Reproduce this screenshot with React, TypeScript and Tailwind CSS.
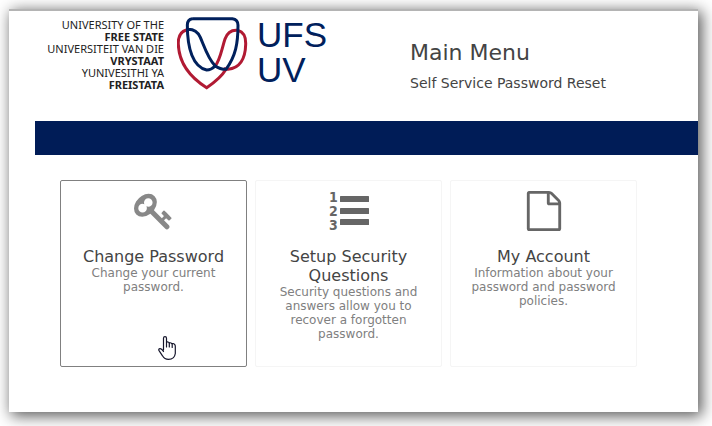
import React from 'react';

interface MenuCardProps {
  title: string;
  description: string;
  icon: React.ReactNode;
  active?: boolean;
}

const KeyIcon = () => (
  <svg className="h-10 w-10" viewBox="0 0 1792 1792" fill="#888888" aria-hidden="true">
    <path d="M832 512q0-80-56-136t-136-56-136 56-56 136q0 42 19 83-41-19-83-19-80 0-136 56t-56 136 56 136 136 56 136-56 56-136q0-42-19-83 41 19 83 19 80 0 136-56t56-136zm851 704q0 17-49 66t-66 49q-9 0-28.5-16t-36.5-33-38.5-40-24.5-26l-96 96 220 220q28 28 28 68 0 42-39 81t-81 39q-40 0-68-28l-671-671q-176 131-365 131-163 0-265.5-102.5t-102.5-265.5q0-160 95-313t248-248 313-95q163 0 265.5 102.5t102.5 265.5q0 189-131 365l355 355 96-96q-3-3-26-24.5t-40-38.5-33-36.5-16-28.5q0-17 49-66t66-49q13 0 23 10 6 6 46 44.5t82 79.5 86.5 86 73 78 28.5 41z" />
  </svg>
);

const ListIcon = () => (
  <svg className="h-10 w-10 overflow-visible" viewBox="0 0 40 40" fill="#666666" aria-hidden="true">
    <g className="font-['DejaVu_Sans_Condensed','DejaVu_Sans',sans-serif] text-[14px] font-bold">
      <text x="0" y="11">1</text>
      <text x="0" y="25">2</text>
      <text x="0" y="39">3</text>
    </g>
    <rect x="11" y="5" width="29" height="6" rx="0.5" />
    <rect x="11" y="17" width="29" height="6" rx="0.5" />
    <rect x="11" y="28" width="29" height="6" rx="0.5" />
  </svg>
);

const FileIcon = () => (
  <svg className="h-10 w-10" viewBox="0 0 1792 1792" fill="#666666" aria-hidden="true">
    <path d="M1596 380q28 28 48 76t20 88v1152q0 40-28 68t-68 28h-1344q-40 0-68-28t-28-68v-1600q0-40 28-68t68-28h896q40 0 88 20t76 48zm-444-244v376h376q-10-29-22-41l-313-313q-12-12-41-22zm384 1528v-1024h-416q-40 0-68-28t-28-68v-416h-768v1536h1280z" />
  </svg>
);

const HandPointer = () => (
  <svg
    className="pointer-events-none absolute bottom-1.5 left-1/2 ml-1 h-6 w-[18px]"
    viewBox="0 0 18 24"
    fill="#ffffff"
    stroke="#15152b"
    strokeWidth="1.2"
    strokeLinejoin="round"
    strokeLinecap="round"
    aria-hidden="true"
  >
    <path d="M5.5 14V2.2Q5.5.7 7 .7T8.5 2.2V6.5Q9 5.8 10 6T11.3 7Q12.5 6.3 14 7.7Q15.5 7 16.8 8.7Q17.4 9.5 17.3 11V17.5Q16.5 23.4 10.5 23.4Q6.5 23.4 4.5 19.8L.9 14.3Q.4 12.8 2 12.6T5.5 15.5" />
    <path d="M8.5 6.5V11M11.3 7V11M14.2 7.8V11.5" fill="none" />
  </svg>
);

const Shield = () => (
  <svg className="h-[75px] w-[71px]" viewBox="36 27 213 225" fill="none" strokeWidth="9" aria-hidden="true">
    {/* Red outline and inner loop */}
    <path
      stroke="#b11a33"
      d="M64 72C43 78 39 95 40 115C42 174 76 214 125 245C151 228 170 212 183 190M150 181C166 161 170 129 180 99C187 79 202 71 219 73C237 78 243 94 242 116C241 158 224 187 189 190L176 188"
    />
    {/* Blue shield and ribbon */}
    <path
      stroke="#00205c"
      d="M82 38H202Q219 40 219 58C219 112 212 151 183 190Q165 190 150 179C130 160 119 125 106 94Q94 68 66 70M150 180Q139 192 125 192C84 183 67 128 67 57Q67 40 82 38"
    />
  </svg>
);

const Logo = () => (
  <div className="flex items-start text-[#222222]">
    <div className="mt-1 w-[129px] text-right font-['Noto_Sans',sans-serif] text-[11px] leading-3">
      <p>UNIVERSITY OF THE</p>
      <p className="font-bold">FREE STATE</p>
      <p>UNIVERSITEIT VAN DIE</p>
      <p className="font-bold">VRYSTAAT</p>
      <p>YUNIVESITHI YA</p>
      <p className="font-bold">FREISTATA</p>
    </div>
    <div className="ml-[13px]">
      <Shield />
    </div>
    <div className="ml-[9px] pt-0.5 font-['Liberation_Sans',sans-serif] text-[35px] leading-[35px] text-[#00205c]">
      <p>UFS</p>
      <p>UV</p>
    </div>
  </div>
);

const MenuCard: React.FC<MenuCardProps> = ({ title, description, icon, active = false }) => (
  <button
    type="button"
    className={`relative flex h-[187px] w-[187px] cursor-pointer flex-col items-center rounded-xs border px-4 pt-2.5 text-center ${
      active ? 'border-[#808080]' : 'border-[#f5f5f5]'
    }`}
  >
    {icon}
    <span className="mt-4 text-base leading-[19px] text-[#444444]">{title}</span>
    <span className="text-xs leading-[14px] text-[#808080]">{description}</span>
    {active && <HandPointer />}
  </button>
);

export default function App() {
  return (
    <div className="min-h-screen overflow-hidden bg-white pt-[9px] pr-3.5 pb-3.5 pl-[9px] font-['DejaVu_Sans',sans-serif]">
      <div className="border-t-2 border-[#b4b4b4] bg-white pb-[45px] pl-[26px] shadow-[3px_3px_14px_1px_rgba(0,0,0,0.65)]">
        <header className="flex h-[110px] items-start pt-1">
          <Logo />
          <div className="ml-[83px] pt-6 text-[#444444]">
            <h1 className="text-[22px] leading-7">Main Menu</h1>
            <p className="mt-1.5 text-sm leading-5">Self Service Password Reset</p>
          </div>
        </header>

        <div className="h-[34px] bg-[#001c57]" />

        <main className="flex flex-wrap gap-2 pt-[25px] pl-[25px]">
          <MenuCard title="Change Password" description="Change your current password." icon={<KeyIcon />} active />
          <MenuCard
            title="Setup Security Questions"
            description="Security questions and answers allow you to recover a forgotten password."
            icon={<ListIcon />}
          />
          <MenuCard
            title="My Account"
            description="Information about your password and password policies."
            icon={<FileIcon />}
          />
        </main>
      </div>
    </div>
  );
}
